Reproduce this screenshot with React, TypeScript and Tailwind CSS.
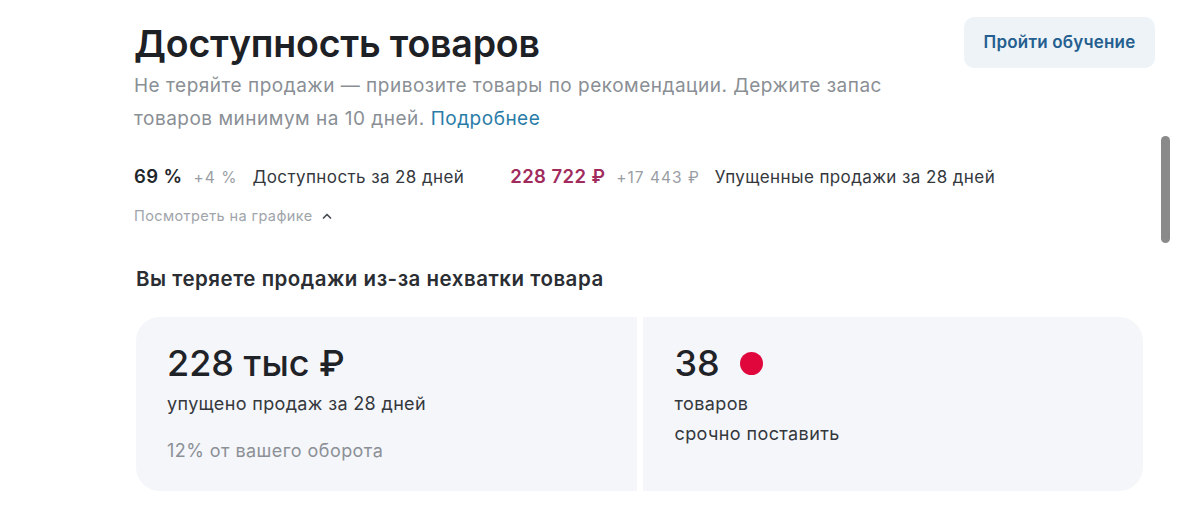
import { FunctionComponent } from "react";

const font = { fontFamily: "Inter, 'Noto Sans', sans-serif" };

const Stat: FunctionComponent<{
  value: string;
  delta: string;
  label: string;
  accent?: boolean;
}> = ({ value, delta, label, accent }) => (
  <div className="flex items-baseline">
    <span
      className={`text-[18.5px] font-semibold tracking-[0.4px] ${accent ? "text-[#a02b5c]" : "text-[#22262b]"}`}
    >
      {value}
    </span>
    <span className="ml-[11px] text-[15.5px] tracking-[1px] text-[#9a9ea4]">
      {delta}
    </span>
    <span className="ml-[15px] text-[17px] tracking-[0.4px] text-[#34383d]">
      {label}
    </span>
  </div>
);

const App: FunctionComponent = () => {
  return (
    <div
      className="relative h-[523px] w-[1179px] overflow-hidden bg-white pl-[134px] pr-[24px]"
      style={font}
    >
      {/* header */}
      <div className="flex items-start justify-between pt-[17px]">
        <h1 className="mt-[5px] text-[37.5px] font-semibold leading-[43px] tracking-[-0.2px] text-[#1d2126]">
          Доступность товаров
        </h1>
        <button className="flex h-[51px] w-[191px] items-center justify-center rounded-[10px] bg-[#eef3f8] text-[17px] font-semibold tracking-[0.2px] text-[#245f8f]">
          Пройти обучение
        </button>
      </div>

      <p className="mt-[1px] max-w-[780px] text-[19px] leading-[33px] tracking-[0.5px] text-[#8a8f95]">
        Не теряйте продажи — привозите товары по рекомендации. Держите запас
        товаров минимум на 10 дней.{" "}
        <a className="text-[#2a7ca8]">Подробнее</a>
      </p>

      {/* summary stats */}
      <div className="mt-[30px] flex h-[24px] items-center gap-[46px]">
        <Stat value="69 %" delta="+4 %" label="Доступность за 28 дней" />
        <Stat
          value="228 722 ₽"
          delta="+17 443 ₽"
          label="Упущенные продажи за 28 дней"
          accent
        />
      </div>

      <button className="mt-[17px] flex h-[20px] items-center gap-[8px] text-[14.5px] tracking-[0.4px] text-[#a0a4aa]">
        Посмотреть на графике
        <svg width="12" height="12" viewBox="0 0 24 24" fill="none">
          <path
            d="M5 16l7-7 7 7"
            stroke="#4a4f55"
            strokeWidth="3.5"
            strokeLinecap="round"
            strokeLinejoin="round"
          />
        </svg>
      </button>

      <h2 className="mt-[39px] pl-[2px] text-[20.5px] font-semibold leading-[28px] tracking-[0.5px] text-[#2a2e33]">
        Вы теряете продажи из-за нехватки товара
      </h2>

      {/* cards */}
      <div className="mt-[24px] ml-[2px] mr-[12px] grid h-[174px] grid-cols-2 gap-[6px]">
        <div className="rounded-l-[24px] bg-[#f4f6fa] pl-[31px] pt-[25px]">
          <div className="text-[36px] font-medium leading-[43px] text-[#1f2328]">
            228 тыс ₽
          </div>
          <div className="mt-[7px] text-[18px] leading-[24px] tracking-[0.35px] text-[#34383d]">
            упущено продаж за 28 дней
          </div>
          <div className="mt-[23px] text-[18px] leading-[24px] tracking-[0.45px] text-[#8c9096]">
            12% от вашего оборота
          </div>
        </div>
        <div className="rounded-r-[24px] bg-[#f4f6fa] pl-[32px] pt-[25px]">
          <div className="flex items-center gap-[20px]">
            <span className="text-[36px] font-medium leading-[43px] text-[#1f2328]">
              38
            </span>
            <span className="h-[23px] w-[23px] rounded-full bg-[#e0073d]" />
          </div>
          <div className="mt-[4px] text-[18px] leading-[30px] tracking-[0.4px] text-[#34383d]">
            товаров
            <br />
            срочно поставить
          </div>
        </div>
      </div>

      {/* scrollbar */}
      <div className="absolute left-[1161px] top-[136px] h-[107px] w-[9px] rounded-full bg-[#8a8a8a]" />
    </div>
  );
};

export default App;
